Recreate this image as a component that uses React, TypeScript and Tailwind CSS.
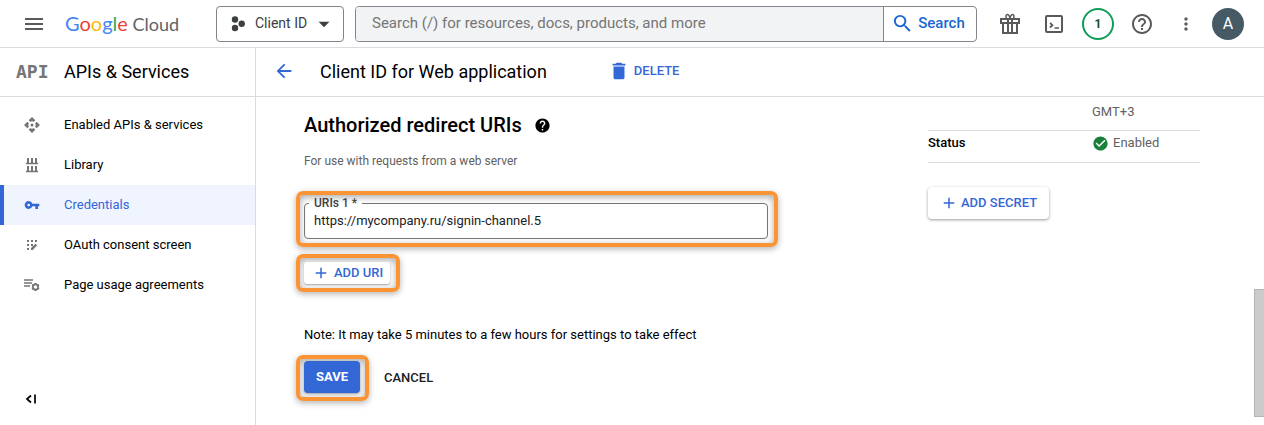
import type { ReactNode } from 'react';
import {
    MdAdd,
    MdArrowBack,
    MdArrowDropDown,
    MdCheckCircle,
    MdDelete,
    MdHelp,
    MdHelpOutline,
    MdMenu,
    MdMoreVert,
    MdSearch,
    MdVpnKey,
} from 'react-icons/md';

function GiftIcon() {
    return (
        <svg width="20" height="22" viewBox="0 0 20 22" fill="none" stroke="currentColor" strokeWidth="2" aria-hidden="true">
            <path d="M1 6h18v4H1zM3 10v10h14V10M8 6v14M12 6v14" />
            <path d="M10 5.500C9.500 2.500 8.500 1.500 7.300 1.500S5.500 3 6.500 5.500M10 5.500C10.500 2.500 11.500 1.500 12.700 1.500S14.500 3 13.500 5.500" strokeWidth="1.500" />
        </svg>
    );
}

function ShellIcon() {
    return (
        <svg width="18" height="18" viewBox="0 0 18 18" fill="none" stroke="currentColor" strokeWidth="2" aria-hidden="true">
            <rect x="1" y="1" width="16" height="16" rx="1" />
            <path d="M5 8l2.500 2.200L5 12.500M9.500 13H14" strokeWidth="1.700" />
        </svg>
    );
}

function ProjectIcon() {
    return (
        <svg width="14" height="16" viewBox="0 0 14 16" fill="currentColor" aria-hidden="true">
            <circle cx="4" cy="3.500" r="3.200" />
            <circle cx="10.700" cy="7.800" r="3.200" />
            <circle cx="4" cy="12" r="3.200" />
        </svg>
    );
}

function EnabledApisIcon() {
    return (
        <svg width="16" height="16" viewBox="0 0 16 16" fill="currentColor" aria-hidden="true">
            <path d="M8 0l3.300 3.300-1.700 1.700L8 3.500 6.400 5 4.700 3.300zM8 16l3.300-3.300L9.600 11 8 12.500 6.400 11l-1.700 1.700zM0 8l3.300-3.300L5 6.400 3.500 8 5 9.600l-1.700 1.700zM16 8l-3.300-3.300L11 6.400 12.500 8 11 9.600l1.700 1.700z" />
            <path d="M6.300 2.500h3.400v1.300L8 4.500l-1.700-.7zM6.300 13.500h3.400v-1.300L8 11.500l-1.700.7zM2.500 6.300v3.400h1.300L4.500 8l-.7-1.700zM13.500 6.300v3.400h-1.300L11.500 8l.7-1.700z" />
            <circle cx="8" cy="8" r="1.500" />
        </svg>
    );
}

function LibraryIcon() {
    return (
        <svg width="16" height="16" viewBox="0 0 16 16" fill="none" stroke="currentColor" aria-hidden="true">
            <path d="M2 6.500h12M2 14.500h12" strokeWidth="1.400" />
            <path d="M4 1v5M8 1v5M12 1v5M4 9v5M8 9v5M12 9v5" strokeWidth="2" />
        </svg>
    );
}

function ConsentIcon() {
    return (
        <svg width="16" height="16" viewBox="0 0 16 16" fill="currentColor" aria-hidden="true">
            <path d="M3 3h2v2H3zM7 3h2v2H7zM11 3h2v2h-2zM3 7h2v2H3zM7 7h2v2H7zM3 11h2v2H3z" />
            <path d="M7 13v-2l4.500-4.300 1.600 1.500L8.800 13z" />
        </svg>
    );
}

function AgreementsIcon() {
    return (
        <svg width="16" height="16" viewBox="0 0 16 16" fill="none" stroke="currentColor" aria-hidden="true">
            <path d="M0 3h9M0 6h8M0 9h6" strokeWidth="1.500" />
            <circle cx="11.500" cy="10" r="2.600" strokeWidth="1.700" />
            <path d="M11.500 6v1.500M11.500 12.500V14M8 8l1.300.7M13.700 11.300l1.300.7M8 12l1.300-.7M13.700 8.700L15 8" strokeWidth="2" />
        </svg>
    );
}

const navItems = [
    { label: 'Enabled APIs & services', icon: <EnabledApisIcon /> },
    { label: 'Library', icon: <LibraryIcon /> },
    { label: 'Credentials', icon: <MdVpnKey size={16} />, active: true },
    { label: 'OAuth consent screen', icon: <ConsentIcon /> },
    { label: 'Page usage agreements', icon: <AgreementsIcon /> },
];

function HeaderButton({ label, children }: { label: string; children: ReactNode }) {
    return (
        <button type="button" aria-label={label} className="flex h-8 w-11 shrink-0 items-center justify-center text-[#5a5a5a]">
            {children}
        </button>
    );
}

function Highlight({ className, children }: { className: string; children: ReactNode }) {
    return (
        <div
            className={`rounded-[7px] border-4 border-[#fb9434] shadow-[0_2px_6px_rgba(0,0,0,0.3),inset_0_2px_7px_rgba(0,0,0,0.35)] ${className}`}
        >
            {children}
        </div>
    );
}

function TopBar() {
    return (
        <header className="flex h-12 items-center border-b border-[#dadce0] pl-[22px] pr-5">
            <button type="button" aria-label="Main menu" className="shrink-0 text-[#5a5a5a]">
                <MdMenu size={24} />
            </button>
            <a href="#home" aria-label="Google Cloud" className="ml-[19px] w-[151px] shrink-0 whitespace-nowrap font-[Lato,sans-serif] text-[20px] leading-6">
                <span className="text-[#4285f4]">G</span>
                <span className="text-[#ea4335]">o</span>
                <span className="text-[#fbbc05]">o</span>
                <span className="text-[#4285f4]">g</span>
                <span className="text-[#34a853]">l</span>
                <span className="text-[#ea4335]">e</span>
                <span className="text-[18px] text-[#5f6368]"> Cloud</span>
            </a>
            <button
                type="button"
                className="flex h-9 w-32 shrink-0 items-center rounded-[4px] border border-[#80868b] pl-3.5 text-[14px] text-[#3c4043]"
            >
                <ProjectIcon />
                <span className="ml-2.5">Client ID</span>
                <MdArrowDropDown size={26} className="ml-1" />
            </button>
            <form className="ml-[11px] flex h-9 flex-1 overflow-hidden rounded-[4px] border border-[#80868b]">
                <input
                    type="search"
                    aria-label="Search"
                    placeholder="Search (/) for resources, docs, products, and more"
                    className="min-w-0 flex-1 bg-[#f1f3f4] px-4 text-[15px] outline-none placeholder:text-[#757575]"
                />
                <button
                    type="button"
                    className="flex w-[93px] items-center justify-center gap-1 border-l border-[#80868b] pr-1 text-[15px] font-medium text-[#1967d2]"
                >
                    <MdSearch size={23} />
                    Search
                </button>
            </form>
            <div className="ml-[11px] flex items-center">
                <HeaderButton label="Free trial">
                    <GiftIcon />
                </HeaderButton>
                <HeaderButton label="Cloud Shell">
                    <ShellIcon />
                </HeaderButton>
                <HeaderButton label="Notifications">
                    <span className="flex size-8 items-center justify-center rounded-full border-2 border-[#0f9d58] text-[12px] font-bold text-[#174d32]">
                        1
                    </span>
                </HeaderButton>
                <HeaderButton label="Help">
                    <MdHelpOutline size={24} />
                </HeaderButton>
                <HeaderButton label="More options">
                    <MdMoreVert size={20} />
                </HeaderButton>
                <button type="button" aria-label="Account" className="ml-1 size-8 rounded-full bg-[#455a64] text-[16px] text-white">
                    A
                </button>
            </div>
        </header>
    );
}

function Sidebar() {
    return (
        <aside className="flex w-64 shrink-0 flex-col border-r border-[#dadce0]">
            <div className="flex h-[49px] items-center border-b border-[#dadce0] pb-0.5 pl-4">
                <span className="w-12 font-['DejaVu_Sans_Mono',monospace] text-[18px] font-bold text-[#757575]">API</span>
                <h2 className="text-[18px]">APIs &amp; Services</h2>
            </div>
            <nav className="mt-2">
                {navItems.map(({ label, icon, active }) => (
                    <a
                        key={label}
                        href={`#${label}`}
                        className={`flex h-10 items-center border-l-4 pl-[18px] text-[13px] ${
                            active ? 'border-[#3367d6] bg-[#f0f4fe] text-[#3367d6]' : 'border-transparent'
                        }`}
                    >
                        <span className={`flex w-5 justify-center ${active ? '' : 'text-[#757575]'}`}>{icon}</span>
                        <span className="ml-[22px]">{label}</span>
                    </a>
                ))}
            </nav>
            <button type="button" aria-label="Collapse menu" className="mb-4 ml-[21px] mt-auto flex size-5 items-center justify-center">
                <svg width="12" height="10" viewBox="0 0 12 10" fill="none" stroke="currentColor" strokeWidth="1.700" aria-hidden="true">
                    <path d="M6 1.500L2 5l4 3.500M10 .5v9" />
                </svg>
            </button>
        </aside>
    );
}

function RedirectForm() {
    return (
        <form className="min-w-0 flex-1 pl-10 pt-3.5">
            <div className="flex items-center gap-3 pl-2">
                <h2 className="text-[20px] font-medium leading-7">Authorized redirect URIs</h2>
                <MdHelp size={17} />
            </div>
            <p className="mt-3.5 pl-2 text-[12px] leading-4 text-[#616161]">For use with requests from a web server</p>

            <Highlight className="mt-[22px] w-[482px] max-w-full pb-1 pl-1 pr-1.5 pt-0.5">
                <fieldset className="rounded-[4px] border border-[#757575] px-1">
                    <legend className="h-3 px-[5px] text-[12px] font-medium leading-3 text-[#424242]">
                        <label htmlFor="uri-1">URIs 1 *</label>
                    </legend>
                    <input
                        id="uri-1"
                        type="text"
                        defaultValue="https://mycompany.ru/signin-channel.5"
                        className="mb-1.5 block h-[23px] w-full px-[5px] text-[13px] text-[#212121] outline-none"
                    />
                </fieldset>
            </Highlight>

            <Highlight className="mt-[7px] w-[104px] p-1">
                <button
                    type="button"
                    className="flex h-[22px] w-[86px] items-center gap-1 rounded-[3px] bg-white pl-2 text-[13px] font-medium text-[#3367d6] shadow-[0_1px_2px_rgba(0,0,0,0.35)]"
                >
                    <MdAdd size={18} />
                    ADD URI
                </button>
            </Highlight>

            <p className="mt-[33px] pl-2 text-[13px] leading-5">Note: It may take 5 minutes to a few hours for settings to take effect</p>

            <div className="mt-2.5 flex items-center gap-[15px]">
                <Highlight className="w-[73px] px-1 pb-1 pt-0.5">
                    <button type="button" className="block h-8 w-14 rounded-[4px] bg-[#3367d6] text-[13px] font-bold text-white shadow-[0_1px_3px_rgba(0,0,0,0.4)]">
                        SAVE
                    </button>
                </Highlight>
                <button type="button" className="text-[13px] font-medium text-[#212121]">
                    CANCEL
                </button>
            </div>
        </form>
    );
}

function ClientDetails() {
    return (
        <section className="mr-[54px] w-[272px] shrink-0">
            <table className="w-full text-left text-[13px] text-[#616161]">
                <tbody>
                    <tr className="h-[33px] border-b border-[#dadce0]">
                        <th className="w-[164px]" />
                        <td className="pb-1">GMT+3</td>
                    </tr>
                    <tr className="h-8 border-b border-[#dadce0]">
                        <th scope="row" className="pb-1.5 font-medium text-black">
                            Status
                        </th>
                        <td className="pb-1.5">
                            <span className="flex items-center gap-1">
                                <MdCheckCircle size={17} className="text-[#188038]" />
                                Enabled
                            </span>
                        </td>
                    </tr>
                </tbody>
            </table>
            <button
                type="button"
                className="mt-6 flex h-8 w-[121px] items-center gap-[3px] rounded-[4px] pl-3 text-[13px] font-medium text-[#3367d6] shadow-[0_1px_3px_rgba(0,0,0,0.4)]"
            >
                <MdAdd size={18} />
                ADD SECRET
            </button>
        </section>
    );
}

export default function App() {
    return (
        <div className="flex min-h-screen flex-col bg-white font-[Roboto,'Liberation_Sans',sans-serif] text-black">
            <TopBar />
            <div className="flex flex-1">
                <Sidebar />
                <main className="min-w-0 flex-1">
                    <div className="flex h-[49px] items-center border-b border-[#dadce0] pb-0.5 pl-[17px]">
                        <button type="button" aria-label="Back" className="text-[#3367d6]">
                            <MdArrowBack size={22} />
                        </button>
                        <h1 className="ml-[25px] text-[18px]">Client ID for Web application</h1>
                        <button type="button" className="ml-[61px] flex items-center gap-1 text-[13px] font-medium text-[#3367d6]">
                            <MdDelete size={22} />
                            DELETE
                        </button>
                    </div>
                    <div className="flex">
                        <RedirectForm />
                        <ClientDetails />
                        <div aria-hidden="true" className="mt-48 h-32 w-2.5 border border-r-0 border-[#b4b4b4] bg-[#cbcbcb]" />
                    </div>
                </main>
            </div>
        </div>
    );
}
